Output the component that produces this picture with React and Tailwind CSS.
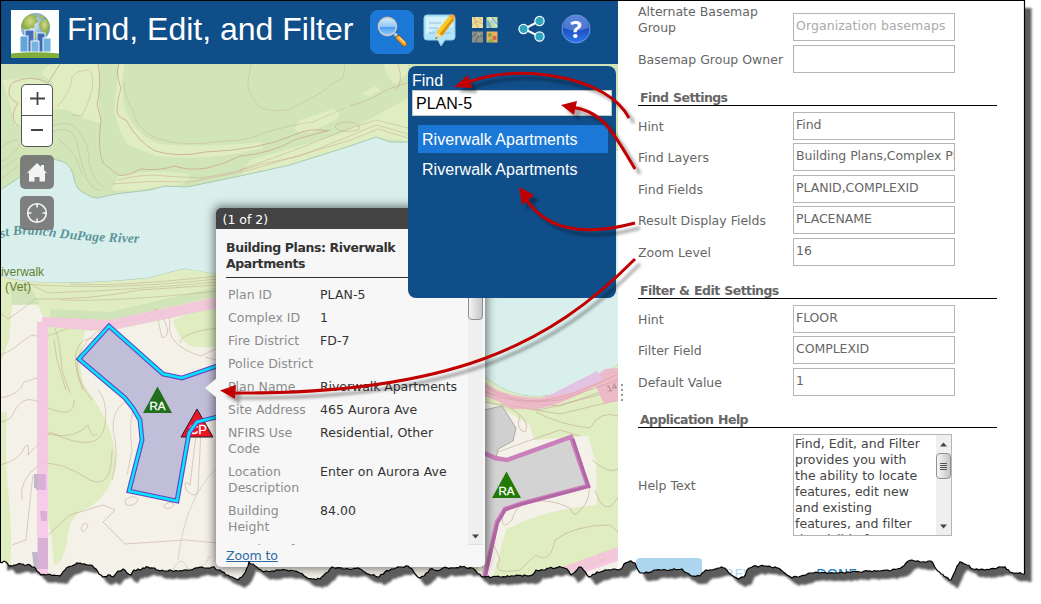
import React from "react";

const TEAR = [
  [0, 562], [6, 562], [9, 566], [14, 565], [21, 564], [30, 565], [34, 567], [37, 571], [41, 575], [46, 575], [60, 576], [65, 570], [68, 567], [72, 566], [77, 563], [82, 564], [90, 565], [96, 569], [99, 574], [103, 577], [110, 575], [113, 577], [118, 571], [123, 569], [127, 573], [131, 575], [134, 570], [140, 570], [143, 568], [148, 567], [153, 568], [158, 570], [166, 571], [190, 570], [200, 567], [206, 568], [212, 567], [220, 570], [226, 575], [232, 577], [238, 580], [242, 577], [245, 573], [248, 566], [249, 562], [252, 564], [255, 566], [262, 571], [272, 571], [276, 570], [285, 570], [294, 571], [300, 573], [306, 577], [312, 579], [320, 579], [323, 576], [328, 572], [332, 567], [345, 569], [358, 568], [365, 572], [372, 575], [379, 577], [385, 572], [390, 570], [400, 567], [408, 566], [412, 569], [416, 575], [420, 578], [424, 576], [430, 569], [440, 570], [443, 568], [455, 568], [462, 567], [472, 568], [475, 570], [478, 574], [483, 577], [492, 577], [500, 577], [513, 576], [532, 575], [536, 570], [543, 570], [549, 568], [561, 567], [567, 569], [571, 575], [579, 567], [582, 568], [589, 577], [597, 572], [607, 570], [613, 569], [621, 569], [624, 564], [631, 561], [635, 563], [638, 570], [641, 573], [648, 573], [655, 570], [666, 570], [682, 569], [687, 573], [692, 576], [700, 576], [706, 570], [712, 570], [718, 568], [725, 568], [729, 573], [733, 576], [738, 579], [744, 577], [747, 570], [752, 567], [760, 566], [775, 567], [781, 570], [787, 575], [792, 578], [801, 576], [812, 573], [835, 573], [860, 572], [880, 571], [897, 569], [902, 567], [906, 563], [912, 560], [920, 562], [930, 561], [933, 563], [936, 569], [941, 574], [946, 577], [951, 580], [957, 566], [960, 562], [967, 565], [973, 569], [985, 570], [997, 568], [1005, 567], [1010, 572], [1016, 573], [1022, 574], [1024.5, 574],
];

// Small deterministic notches along the paper edge.
const tearLine = (() => {
  const out = [];
  for (let i = 0; i < TEAR.length - 1; i++) {
    const [x0, y0] = TEAR[i];
    const [x1, y1] = TEAR[i + 1];
    const steps = Math.max(1, Math.round((x1 - x0) / 2));
    for (let s = 0; s < steps; s++) {
      const t = s / steps;
      const n = Math.sin((i * 7 + s) * 12.9898) * 43758.5453;
      const j = s === 0 ? 0 : (n - Math.floor(n)) * 2 - 1;
      out.push(`${(x0 + (x1 - x0) * t).toFixed(1)} ${(y0 + (y1 - y0) * t + j).toFixed(1)}`);
    }
  }
  out.push("1024.5 574");
  return out.join(" L");
})();

function TornEdge() {
  return (
    <svg className="pointer-events-none absolute inset-0" width="1041" height="604">
      <defs>
        <clipPath id="outside">
          <path d={`M0 604 L${tearLine} L1024.5 0 L1041 0 L1041 604 Z`} />
        </clipPath>
        <filter id="soft" x="-5%" y="-5%" width="110%" height="110%">
          <feGaussianBlur stdDeviation="1.3" />
        </filter>
      </defs>
      <g clipPath="url(#outside)">
        <rect width="1041" height="604" fill="#fff" />
        <path d={`M0 0 L${tearLine} L1024.5 0 Z`} transform="translate(7 8)" fill="#5c5c5c" filter="url(#soft)" />
      </g>
      <path d={`M0.5 0.5 L${tearLine} L1024.5 0.5 Z`} fill="none" stroke="#000" strokeWidth="1.2" />
    </svg>
  );
}

function Triangle({ x, y, color, label }) {
  return (
    <g transform={`translate(${x} ${y})`}>
      <path d="M0 -14 L14.500 12.500 H-14.500 Z" fill={color} />
      <text x="0" y="9.500" textAnchor="middle" fill="#fff" stroke="#fff" strokeWidth=".3" fontSize="11.5" className="font-['Liberation_Sans',sans-serif]">{label}</text>
    </g>
  );
}

function MapDrawing() {
  return (
    <svg className="block" width="617" height="516" viewBox="1 64 617 516">
      <rect x="0" y="64" width="620" height="520" fill="#f4f1e8" />
      {/* upper bank */}
      <path d="M0 64 H620 V200 H0Z" fill="#d1e5b9" />
      <g fill="#dfedc1">
        <path d="M55 64 H100 L98 95 L101 124 L84 118 L68 110 L53 109 L53 82 L42 75 Q42 66 55 64Z" />
        <path d="M2 80 L30 78 L50 84 L53 112 L36 120 L15 126 Q12 110 8 98Z" />
        <path d="M119 64 H125 L122 82 L124 104 Q132 134 160 144 Q200 148 263 142 L263 148 Q210 162 157 156 L128 145 Q118 132 114 110Z" />
        <path d="M294 128 L300 120 L333 109 Q342 112 337 119 L312 132 L298 132Z" />
        <path d="M112 190 L118 176 Q160 168 188 174 L190 178 Q184 186 165 186 L130 191Z" />
        <path d="M240 176 L250 160 L340 134 L372 118 L408 98 V142 L376 137 L350 146 L290 165Z" />
        <path d="M384 64 H408 V72 L396 84 Q386 78 384 64Z M360 94 L376 86 L380 90 L370 96Z" />
      </g>
      <g fill="none" stroke="#c9a090" strokeOpacity=".55" strokeWidth="1">
        <path d="M60 64 L48 83 Q32 74 14 82 Q8 86 9 94 Q11 101 18 103 Q8 118 18 126" strokeOpacity=".7" />
        <path d="M98 64 Q102 85 97 104 L101 120 Q97 148 103 163 L112 170 L118 175 Q128 177 140 169 Q160 171 174 166 Q190 171 207 168 Q225 164 240 156 Q270 154 297 139 L330 130" strokeOpacity=".7" />
        <path d="M119 64 Q115 74 121 88 Q117 102 117 111 Q117 117 126 120 Q138 142 155 151 Q180 158 205 152 Q260 150 294 135 Q310 127 328 131" strokeOpacity=".75" />
        <path d="M124 82 Q124 98 134 112 Q134 126 155 138 Q185 148 222 141 Q250 141 263 133 Q295 124 313 122 L345 108" strokeOpacity=".35" />
        <path d="M0 148 Q14 138 18 140 M52 126 Q74 118 82 136 Q90 148 89 164 Q94 182 105 188 M52 132 Q68 124 76 138 Q80 160 86 178 Q92 190 100 190 M58 138 Q70 150 76 158 L82 174" strokeOpacity=".35" />
        <path d="M0 162 Q14 156 20 144 M0 170 L18 158 M0 180 L18 166" strokeOpacity=".35" />
        <path d="M118 180 Q145 173 165 176 L200 178 Q240 172 262 164 L300 156 L345 138 L376 125 L408 134 M112 184 Q150 180 190 182 L250 170 L348 141 L378 129 L408 138 M240 170 L300 148 L345 130 L376 120 L408 128" strokeOpacity=".45" />
        <path d="M335 127 Q336 122 350 122 Q363 124 358 130 Q340 134 335 127Z" strokeOpacity=".5" />
        <path d="M251 64 L248 82 Q246 90 259 107 Q270 112 288 110 Q300 104 322 92 Q330 84 343 78 L345 64" strokeOpacity=".35" />
        <path d="M57 107 Q72 90 72 77 Q76 70 90 70 Q94 78 92 90 Q88 105 82 116 L72 115" strokeOpacity=".4" />
        <path d="M398 64 Q404 82 396 90 M408 83 Q390 87 378 95 Q365 102 350 106" strokeOpacity=".5" />
      </g>
      {/* river */}
      <path d="M0 190 L20 177 Q36 158 50 158 L64 162 Q72 167 74 178 Q76 190 84 193 L92 197 L98 198 L115 194 L150 190 L165 186 L187 187 L240 176 L290 165 L350 146 L376 137 L390 142 L425 142 L620 150 V363 Q598 381 560 393 Q540 399 520 395 Q500 390 484 376 L215 274 Q200 272 185 269 Q170 272 150 278 Q100 283 65 283 Q25 284 0 276Z" fill="#d9efec" stroke="#a9c9b6" strokeWidth="1" />
      {/* lower bank */}
      <path d="M0 276 Q25 284 65 283 Q100 283 150 278 Q170 272 185 269 L217 274 V309 L113 330 L85 331 Q76 365 84 385 Q114 425 116 460 Q114 492 88 508 Q70 514 68 535 Q64 565 54 565 L52 540 L48 520 V327 L38 305 L12 305 L9 340 L0 365Z" fill="#dfedc1" />
      <path d="M10 284 H28 L40 304 L12 305Z M51 309 L110 312 L217 287 V296 L110 320 L50 318Z" fill="#d1e3b8" />
      <path d="M0 412 L7 412 Q5 440 7 480 Q13 530 10 570 H0Z M173 320 L217 304 V347 H195 Q180 345 173 320Z" fill="#dfedc1" />
      <g fill="none" stroke="#bfa18e" strokeOpacity=".5" strokeWidth="1">
        <path d="M0 313 L8 319 Q22 310 35 299 Q90 300 140 290 L217 285" />
        <path d="M30 284 L48 293 Q130 290 217 282 M25 284 Q110 291 217 279 M60 300 Q120 302 217 291 M70 284 Q120 287 217 276" strokeOpacity=".45" />
        <path d="M0 355 Q14 350 20 343 L32 335 Q44 340 68 328 M0 398 Q20 395 24 382 L37 378" />
        <path d="M83 390 Q70 360 79 345 Q88 333 106 342 M92 400 Q78 384 77 365 Q82 325 140 318 Q168 304 170 322 Q165 345 201 356" />
        <path d="M201 356 L217 348 M205 357 L217 360 M180 343 Q180 333 217 328 M157 315 Q150 308 158 310 Q175 335 162 338 Q158 320 157 315" />
        <path d="M70 393 L62 370 Q60 340 55 328 M66 390 L57 360 L54 340 M0 465 Q20 460 25 447 Q30 440 28 455 L50 432 Q100 456 105 425 Q108 400 98 390" />
        <path d="M0 422 Q12 420 14 412 Q25 390 46 407 Q75 420 74 400 M48 434 Q75 440 88 425 Q92 440 97 434 M22 500 Q18 480 40 464 Q60 460 90 480 Q112 490 112 450" />
        <path d="M48 535 L70 515 L103 505 L115 510 L103 522 L125 544 L185 540 L217 543 M12 545 L26 540 Q30 500 33 475" />
        <path d="M128 400 Q112 408 113 430 Q120 455 112 480 M135 405 Q128 420 132 450 L127 475" strokeOpacity=".45" />
        <path d="M125 500 Q135 493 138 500 Q134 507 126 505Z M164 506 Q168 500 174 504 Q172 510 165 508Z M82 526 Q85 520 88 526 Q84 534 81 530Z" />
        <path d="M196 435 L190 485 Q183 478 186 490 Q196 500 198 490 L201 430" strokeOpacity=".5" />
        <path d="M215 470 Q185 500 178 560" stroke="#aaa" strokeOpacity=".4" />
        <path d="M168 580 Q180 550 187 568 Q200 575 210 556" strokeOpacity=".4" />
      </g>
      <path d="M42 317 L110 320 L217 297 V308 L113 330 L85 330 L48 327 V575 H37 V322 H42Z" fill="#f4c2de" fillOpacity=".85" />
      <path d="M37 473 H48 V575 H37Z" fill="#f8cbea" />
      <g>
        <path d="M34 474 H46 V490 H36Z M40 511 H47 V521 H41Z M38 538 H48 V569 H38Z" fill="#d9b0d6" />
        <path d="M34 474 H38 V488 H34Z M32 552 H38 V569 H34Z" fill="#c4b5c8" />
      </g>
      {/* east side */}
      <path d="M484 376 Q500 390 520 395 Q540 399 560 393 Q598 381 620 363 V580 H470 V400Z" fill="#dfedc1" />
      <path d="M484 400 L508 412 L530 425 L534 440 L588 436 L596 463 L597 505 Q540 510 506 530 L492 580 H478Z" fill="#f4f1e8" />
      <path d="M560 580 L618 556 V580Z" fill="#f4f1e8" />
      <g fill="none" stroke="#c3a798" strokeOpacity=".6" strokeWidth="1">
        <path d="M484 402 Q510 405 520 415 Q515 430 525 432 Q530 425 520 415 M500 404 L540 410 L618 390 M510 406 L560 414 L618 400 M515 402 L560 406 L618 386 M536 412 Q560 425 590 428 Q600 410 618 416" />
        <path d="M498 452 Q530 440 560 430 L580 436 M592 460 Q610 475 618 469 M595 490 Q605 520 618 497 M590 487 Q588 505 580 510 Q575 520 570 508 Q550 498 530 502 Q515 505 512 520 Q500 532 503 515" />
        <path d="M494 545 L500 560 Q490 575 520 570 L536 555 Q550 565 555 540 Q575 525 610 525 L618 532" />
        <circle cx="602" cy="557" r="3.5" />
      </g>
      <path d="M484 381 Q500 397 540 398 Q575 390 600 373 L605 369 L618 368 V401 L604 404 L596 386 Q560 405 538 409 H512 Q498 400 484 396Z" fill="#efb2c8" fillOpacity=".85" />
      <path d="M546 397 L597 371 L603 380 L570 393Z" fill="#e3c3e3" />
      <path d="M560 568 L620 546 V560 L580 574Z" fill="#f6bfdc" fillOpacity=".85" />
      <g fill="none" stroke="#d898a8" strokeOpacity=".6"><path d="M484 386 Q510 402 540 401 Q570 398 618 374 M484 391 Q515 406 560 400 L618 380" /></g>
      <text x="608" y="392" transform="rotate(-20 608 392)" fontSize="9" fill="#a8847c" className="font-['Liberation_Sans',sans-serif]">14</text>
      <path d="M484 410 L502 406 L516 428 L513 441 L498 449 L496 458 L484 453Z" fill="#d0d0d0" stroke="#aaa" />
      <path d="M482 453 L507 460 L571 437 L588 486 L520 504 L505 509 L497 522 L482 580Z" fill="#d3d3d3" />
      <path d="M482 452 L495 458 L507 460 L571 437 L588 486 L520 504 L505 509 L497 522 L484 580" fill="none" stroke="#cb80bb" strokeWidth="4.500" />
      <path d="M573 439 L588.500 486.500 L520 504.500 L505 510 L497.500 523 L484.500 580" fill="none" stroke="#b467a6" strokeWidth="3" />
      {/* selected building */}
      <path d="M109 326 L79 359 L125 398 L133 408 L140 420 L142 440 L129 491 L177 501 L189 433 L197 422 L217 416 V366 L182 378 L163 374Z" fill="#c0bed9" />
      <Triangle x={157.5} y={400.5} color="#1f6f1d" label="RA" />
      <path d="M197 409 L213 437 H181Z" fill="#ee1424" stroke="#222" />
      <text x="198" y="434" textAnchor="middle" fill="#fff" stroke="#fff" strokeWidth=".3" fontSize="13" className="font-['Liberation_Sans',sans-serif]">CP</text>
      <g fill="none" strokeLinejoin="miter">
        <path d="M217 417 L197 422 L189 433 L177 501 L129 491 L142 440 L140 420 L133 408 L125 398 L79 359 L109 326 L163 374 L182 378 L217 366" stroke="#6a3fc4" strokeWidth="4.800" />
        <path d="M217 417 L197 422 L189 433 L177 501 L129 491 L142 440 L140 420 L133 408 L125 398 L79 359 L109 326 L163 374 L182 378 L217 366" stroke="#00e8ff" strokeWidth="2.600" />
      </g>
      <Triangle x={506.5} y={485.5} color="#217a05" label="RA" />
      <path id="river" d="M1 238 Q20 232 50 236.500 Q95 243 160 243" fill="none" />
      <text fontSize="13.500" fontWeight="bold" fontStyle="italic" fill="#5b9599" className="font-['Liberation_Serif',serif]">
        <textPath href="#river" textLength="139">st Branch DuPage River</textPath>
      </text>
      <g fontSize="12" fill="#64802e" className="font-['Liberation_Sans',sans-serif]">
        <text x="1" y="276" textLength="43">iverwalk</text>
        <text x="5" y="290.500" textLength="26">(Vet)</text>
      </g>
    </svg>
  );
}

function Logo() {
  return (
    <svg width="48" height="48" viewBox="0 0 48 48" className="block bg-white">
      <defs>
        <radialGradient id="globe" cx=".4" cy=".4"><stop offset="0" stopColor="#e3f0f8" /><stop offset="1" stopColor="#6d9fce" /></radialGradient>
        <radialGradient id="land" cx=".5" cy=".4"><stop offset="0" stopColor="#d3da86" /><stop offset="1" stopColor="#86a93f" /></radialGradient>
      </defs>
      <circle cx="24.500" cy="17.500" r="14.500" fill="url(#globe)" />
      <path d="M12 10 Q16 5 21 4 L26 6 L25 9 L28 11 L24 14 L23 18 L19 18 L17 22 L13 19 L10.500 18 Q10.500 13 12 10Z" fill="url(#land)" />
      <path d="M30 11 L35 8 L38 12 L38.500 18 L36 25 L33 22 L29 19 L28 14Z" fill="url(#land)" />
      <path d="M18 22 L25 23 L25 28 L19 30Z M28 4 L34 7 L31 9 L28 7Z" fill="#a9bd55" />
      <g stroke="#fff" strokeWidth=".9">
        <rect x="14" y="20" width="9" height="22" fill="#4370b5" />
        <rect x="26" y="23" width="8" height="19" fill="#3d6cb4" />
        <rect x="9" y="26" width="8" height="16" fill="#62a5db" />
        <rect x="32" y="28" width="8" height="14" fill="#72b2de" />
        <rect x="20" y="31" width="8" height="11" fill="#74b4dd" />
      </g>
      <path d="M0 43.500 Q24 41 48 43.500 V48 H0Z" fill="#7fae3b" />
    </svg>
  );
}

function SearchIcon() {
  return (
    <svg width="32" height="32" viewBox="0 0 32 32" className="-ml-px -mt-[3px]">
      <defs><linearGradient id="lens" x1="0" y1="0" x2="0" y2="1"><stop offset="0" stopColor="#d9efff" /><stop offset=".5" stopColor="#8fc6f7" /><stop offset=".55" stopColor="#4e9df0" /><stop offset="1" stopColor="#8fd0fa" /></linearGradient></defs>
      <path d="M18 18 L22 22" stroke="#ccd3da" strokeWidth="3" />
      <path d="M22 22.500 L28.500 29" stroke="#a5620f" strokeWidth="5" strokeLinecap="round" />
      <path d="M22 22.500 L28.500 29" stroke="#ffa526" strokeWidth="3.400" strokeLinecap="round" />
      <path d="M23 22 L29 28" stroke="#ffe6a8" strokeWidth="1.300" />
      <circle cx="11.500" cy="11.500" r="9" fill="url(#lens)" stroke="#c8d3dd" strokeWidth="1.800" />
      <circle cx="11.500" cy="11.500" r="10" fill="none" stroke="#4d7096" strokeWidth=".6" />
    </svg>
  );
}

function NoteIcon() {
  return (
    <svg width="34" height="34" viewBox="0 0 34 34">
      <path d="M4 1 H29 Q32 1 32 4 V23 Q32 26 29 26 H22 L18 32 L15 26 H4 Q1 26 1 23 V4 Q1 1 4 1Z" fill="#b4e4f8" stroke="#8fcdea" />
      <path d="M3 3 H30 V13 Q15 13 3 20Z" fill="#d5f1fb" />
      <path d="M6 9 H18 M6 14 H15 M6 19 H12 M20 19 H28" stroke="#93bed2" strokeWidth="1" />
      <path d="M13.500 18 L26 2 L31 6 L19 22 L12.500 25Z" fill="#fbc926" />
      <path d="M16.500 20 L29 4.500 L31 6 L19 22Z" fill="#dd960c" />
      <path d="M26 2 Q28 -1 31 1 Q33 3 31 6Z" fill="#f0a23a" />
      <path d="M13.500 18 L19 22 L12.500 25Z" fill="#f1d7a0" />
      <path d="M12.300 25 L13 23 L14.500 24Z" fill="#444" />
    </svg>
  );
}

function BasemapIcon() {
  return (
    <svg width="26" height="26" viewBox="0 0 26 26">
      <rect x="0" y="0" width="11" height="11" fill="#eddc9e" /><path d="M0 8 L5 4 L11 7 M2 0 L6 11 M7 1 L10 4" stroke="#c9a25a" strokeWidth=".8" fill="none" />
      <rect x="14.500" y="0" width="11" height="11" fill="#c9dea2" /><path d="M14.500 3 L18 5 L20 11 H17 L14.500 8Z M20 0 L19 4 L23 8 L25.500 7" fill="#7db4d0" /><path d="M17 0 L25 9" stroke="#fff" />
      <rect x="0" y="14.500" width="11" height="11" fill="#8b8f88" /><path d="M0 20 L5 16 L11 20 M3 25 L8 17" stroke="#5c645e" fill="none" /><path d="M4 16 H9 L8 19Z" fill="#a8a79c" />
      <rect x="14.500" y="14.500" width="11" height="11" fill="#e9b05d" /><circle cx="18" cy="18" r="2" fill="#7da746" /><circle cx="22.500" cy="21" r="2.200" fill="#d5644b" /><path d="M15 25 L19 21 L22 25Z" fill="#8bb65a" />
    </svg>
  );
}

function ShareIcon() {
  return (
    <svg width="28" height="28" viewBox="0 0 28 28">
      <path d="M21.500 6 L6 14 L21.500 21.500" fill="none" stroke="#fff" strokeWidth="2" />
      <g fill="#2ba5bd" stroke="#fff" strokeWidth="1.200">
        <circle cx="21.500" cy="6" r="4.600" /><circle cx="5.500" cy="14" r="4.600" /><circle cx="21.500" cy="21.500" r="4.600" />
      </g>
    </svg>
  );
}

function HelpIcon() {
  return (
    <svg width="30" height="30" viewBox="0 0 30 30">
      <defs><linearGradient id="help" x1="0" y1="0" x2="0" y2="1"><stop offset="0" stopColor="#3e70d5" /><stop offset=".5" stopColor="#1c4fc0" /><stop offset="1" stopColor="#2f78f0" /></linearGradient></defs>
      <circle cx="15" cy="15" r="14" fill="url(#help)" stroke="#6d9be0" />
      <path d="M2.500 14 A12.500 12.500 0 0 1 27.500 14 Q15 19 2.500 14Z" fill="#7397dd" opacity=".55" />
      <text x="15" y="23.500" textAnchor="middle" fontSize="24" fontWeight="bold" fill="#fff" className="font-['Open_Sans',sans-serif]">?</text>
    </svg>
  );
}

function Header() {
  return (
    <header className="flex h-[63px] shrink-0 items-start bg-[#104e8a] pl-[10px] pt-[9px]">
      <Logo />
      <h1 className="ml-[8px] w-[303px] whitespace-nowrap font-['Liberation_Sans',sans-serif] text-[32px] leading-[38px] text-white">Find, Edit, and Filter</h1>
      <div className="flex h-11 w-11 items-center justify-center rounded-lg bg-[#1c78d7]"><SearchIcon /></div>
      <div className="ml-[9px] mt-[4px]"><NoteIcon /></div>
      <div className="ml-[15px] mt-[7px]"><BasemapIcon /></div>
      <div className="ml-[20px] mt-[5px]"><ShareIcon /></div>
      <div className="ml-[15px] mt-[4px]"><HelpIcon /></div>
    </header>
  );
}

function MapControls() {
  return (
    <div className="absolute left-[19px] top-[20px] flex w-[34px] flex-col items-center">
      <div className="flex h-[63px] w-8 flex-col rounded-[5px] border border-[#555] bg-white">
        <div className="flex flex-1 items-center justify-center border-b border-[#555] pb-[2px]">
          <svg width="15" height="15"><path d="M7.500 1 V14 M0 7.500 H15" stroke="#444" strokeWidth="1.800" /></svg>
        </div>
        <div className="flex flex-1 items-center justify-center pb-[3px]">
          <svg width="12" height="13"><path d="M0 7 H12" stroke="#444" strokeWidth="2" /></svg>
        </div>
      </div>
      <div className="mt-2 flex h-[34px] w-[34px] items-center justify-center rounded-[5px] bg-[#6c6c6c]/85">
        <svg width="20" height="20" viewBox="0 0 20 20"><path d="M10 1 L14 5 V3 H17 V8 L20 11 H18 V19.500 H12.500 V15 H7.500 V19.500 H2 V11 H0Z" fill="#f4f4f4" /></svg>
      </div>
      <div className="mt-[7px] flex h-[34px] w-[34px] items-center justify-center rounded-[5px] bg-[#6c6c6c]/85">
        <svg width="22" height="22" viewBox="0 0 22 22" fill="none" stroke="#f4f4f4" strokeWidth="1.600"><circle cx="11" cy="11" r="9.300" /><path d="M11 1 V5.500 M11 16.500 V21 M1 11 H5.500 M16.500 11 H21" /></svg>
      </div>
    </div>
  );
}

const ATTRS = [
  ["Plan ID", "PLAN-5"],
  ["Complex ID", "1"],
  ["Fire District", "FD-7"],
  ["Police District", ""],
  ["Plan Name", "Riverwalk Apartments"],
  ["Site Address", "465 Aurora Ave"],
  ["NFIRS Use Code", "Residential, Other"],
  ["Location Description", "Enter on Aurora Ave"],
  ["Building Height", "84.00"],
  ["Number of", ""],
];

function Popup() {
  return (
    <div className="absolute left-[214.5px] top-[144px] h-[359px] w-[269px] font-['DejaVu_Sans',sans-serif] text-[12.5px] leading-4 text-[#333]">
      <svg className="absolute -left-[11px] top-[170px]" width="12" height="20"><path d="M12 0 L0 10 L12 20Z" fill="#f7f7f7" /></svg>
      <div className="flex h-full flex-col overflow-hidden rounded-[5px] bg-[#f7f7f7] shadow-[0_0_10px_2px_rgba(0,0,0,0.5)]">
        <div className="h-[21px] shrink-0 bg-[#444] pl-[7px] leading-[23px] text-white">(1 of 2)</div>
        <div className="ml-[10.5px] mt-[11px] h-[38px] w-[242px] shrink-0 border-b border-[#333] font-bold tracking-[-0.4px]">Building Plans: Riverwalk<br />Apartments</div>
        <div className="flex h-[267px] shrink-0">
          <div className="ml-[12.5px] mt-[9px] flex h-[258px] w-[240px] flex-col gap-[7px] overflow-hidden">
            {ATTRS.map(([k, v]) => (
              <div key={k} className="flex shrink-0">
                <div className="w-[92px] shrink-0 pr-2 text-[#8c8c8c]"><span className={k === "Police District" || k === "Site Address" ? "whitespace-nowrap" : ""}>{k}</span></div>
                <div className={k === "Plan Name" ? "whitespace-nowrap tracking-[-0.07px]" : "whitespace-nowrap tracking-[0.05px]"}>{v}</div>
              </div>
            ))}
          </div>
          <div className="flex w-[15px] flex-col items-center justify-between border-b border-[#e0e0e0] bg-[#efefef]">
            <div className="h-[42px] w-[15px] rounded-sm border border-[#8d8d8d] bg-linear-to-r from-[#f4f4f4] to-[#c5c5c5]" />
            <svg className="mb-[5px]" width="7" height="5"><path d="M0 0.500 H7 L3.500 4.500Z" fill="#444" /></svg>
          </div>
        </div>
        <div className="pl-[10.5px] pt-[3px] tracking-[-0.1px] text-[#2b6aa5] underline">Zoom to</div>
      </div>
    </div>
  );
}

function FindPanel() {
  return (
    <div className="absolute left-[407px] top-[2px] flex h-[232px] w-[208px] flex-col rounded-lg bg-[#104e8a] px-1 font-['Liberation_Sans',sans-serif] text-base text-white">
      <div className="mt-[4px] h-5 leading-[21px]">Find</div>
      <div className="h-[26px] border border-[#c5c5c5] bg-white pl-[3px] leading-[25px] text-black">PLAN-5</div>
      <div className="mx-[6px] mt-[9px] flex flex-col gap-0.5">
        <div className="h-7 w-[190px] bg-[#1c78d7] pl-1 leading-[30px] tracking-[0.04px]">Riverwalk Apartments</div>
        <div className="h-7 w-[190px] pl-1 leading-[30px] tracking-[0.04px]">Riverwalk Apartments</div>
      </div>
    </div>
  );
}

function Field({ label, value }) {
  return (
    <div className="flex h-[31.5px] shrink-0 items-start">
      <div className="flex h-[29px] w-[155px] shrink-0 items-center leading-4"><span className="mt-px">{label}</span></div>
      <div className="h-7 w-[162px] overflow-hidden whitespace-nowrap border border-[#b5b5b5] pl-[2px] leading-[23px] tracking-[-0.06px]">{value}</div>
    </div>
  );
}

function SectionTitle({ children }) {
  return <h2 className="h-4 w-[359px] shrink-0 border-b border-black pl-[2px] text-[12.5px] font-bold leading-[15px] tracking-[-0.58px] [word-spacing:1px]">{children}</h2>;
}

function SettingsPanel() {
  return (
    <section className="flex h-full w-[406px] flex-col pl-[20px] font-['DejaVu_Sans',sans-serif] text-[12.5px] text-[#666]">
      <div className="mt-[12px] flex flex-col">
        <div className="flex h-8 shrink-0 items-start">
          <div className="-mt-[9px] w-[155px] pr-6 leading-4">Alternate Basemap Group</div>
          <div className="h-7 w-[162px] overflow-hidden whitespace-nowrap border border-[#b5b5b5] pl-[2px] leading-[24px] tracking-[0.08px] text-[#aaa]">Organization basemaps</div>
        </div>
        <Field label="Basemap Group Owner" value="" />
      </div>
      <div className="mt-[13px]"><SectionTitle>Find Settings</SectionTitle></div>
      <div className="mt-[6px] flex flex-col">
        <Field label="Hint" value="Find" />
        <Field label="Find Layers" value="Building Plans,Complex Plans" />
        <Field label="Find Fields" value="PLANID,COMPLEXID" />
        <Field label="Result Display Fields" value="PLACENAME" />
        <Field label="Zoom Level" value="16" />
      </div>
      <div className="mt-[13.5px]"><SectionTitle>Filter &amp; Edit Settings</SectionTitle></div>
      <div className="mt-[6px] flex flex-col">
        <Field label="Hint" value="FLOOR" />
        <Field label="Filter Field" value="COMPLEXID" />
        <Field label="Default Value" value="1" />
      </div>
      <div className="mt-[13px]"><SectionTitle>Application Help</SectionTitle></div>
      <div className="mt-[6px] flex shrink-0 items-center">
        <div className="w-[155px] pt-[2px]">Help Text</div>
        <div className="flex h-[102px] w-[159px] border border-[#b5b5b5]">
          <div className="h-[100px] w-[142px] overflow-hidden whitespace-nowrap pl-px pt-px leading-4 tracking-[0.03px] text-[#444]">
            Find, Edit, and Filter<br />provides you with<br />the ability to locate<br />features, edit new<br />and existing<br />features, and filter<br />the visible features
          </div>
          <div className="flex w-[15px] flex-col items-center bg-[#efefef] py-[6px]">
            <svg className="mt-px shrink-0" width="7" height="5"><path d="M0 4.500 H7 L3.500 0.500Z" fill="#444" /></svg>
            <div className="mt-[6px] flex h-[26px] w-[15px] shrink-0 flex-col items-center justify-center gap-px rounded-sm border border-[#909090] bg-linear-to-r from-[#f5f5f5] to-[#c6c6c6]">
              <div className="h-px w-[7px] bg-[#555]" /><div className="h-px w-[7px] bg-[#555]" /><div className="h-px w-[7px] bg-[#555]" /><div className="h-px w-[7px] bg-[#555]" />
            </div>
            <svg className="mt-auto shrink-0" width="7" height="5"><path d="M0 0.500 H7 L3.500 4.500Z" fill="#444" /></svg>
          </div>
        </div>
      </div>
      <div className="-ml-[2px] mt-[22px] flex shrink-0 items-center text-[14px]">
        <div className="h-8 w-[66px] rounded bg-[#aed6f0]" />
        <div className="ml-[14px] w-[100px] leading-8 text-[#b5d9ef]">PREVIEW</div>
        <div className="leading-8 text-[#1b7fc4]">DONE</div>
      </div>
    </section>
  );
}

function Arrows() {
  return (
    <svg className="pointer-events-none absolute inset-0" width="1041" height="604">
      <defs>
        <filter id="drop" x="-10%" y="-10%" width="125%" height="140%">
          <feDropShadow dx="5" dy="5" stdDeviation="1.5" floodColor="#000" floodOpacity=".35" />
        </filter>
      </defs>
      <g filter="url(#drop)" fill="none" stroke="#c00000" strokeWidth="3">
        <path d="M629 118 C620 100 595 82 550 75.500 C520 71 490 74 466 83" />
        <path d="M635 169 C612 130 602 110 570 107" />
        <path d="M635 223 Q553 245 524 196" />
        <path d="M635 259 C550 345 450 395 230 393" />
        <g fill="#c00000" stroke="none">
          <path d="M454 87 L468 75 L472 88Z" />
          <path d="M561 105 L577 101 L574 115Z" />
          <path d="M519 187 L534 195 L522 205Z" />
          <path d="M220 390.500 L236 385 L235 399Z" />
        </g>
      </g>
    </svg>
  );
}

export default function App() {
  return (
    <main className="relative h-[604px] w-[1041px] overflow-hidden bg-white">
      <div className="flex h-full w-[1025px] border border-black">
        <section className="flex w-[617px] shrink-0 flex-col overflow-hidden">
          <Header />
          <div className="relative h-[516px]">
            <MapDrawing />
            <MapControls />
            <Popup />
            <FindPanel />
          </div>
        </section>
        <SettingsPanel />
      </div>
      <svg className="absolute left-[621px] top-[383px]" width="3" height="20"><path d="M1 1 V19" stroke="#777" strokeWidth="1.500" strokeDasharray="2 3" /></svg>
      <Arrows />
      <TornEdge />
    </main>
  );
}
